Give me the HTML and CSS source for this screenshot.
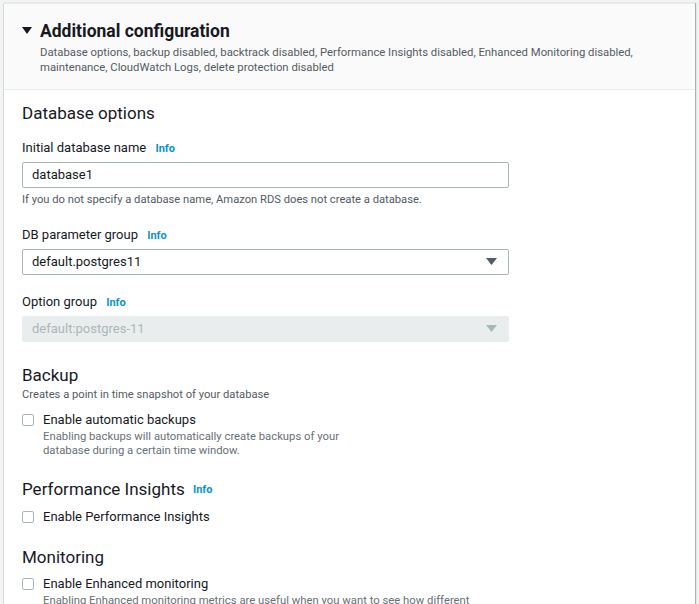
FILE: index.html
```html
<!DOCTYPE html>
<html lang="en">
<head>
<meta charset="utf-8">
<title>Additional configuration</title>
<link rel="stylesheet" href="styles.css">
</head>
<body>
<div class="page">
  <section class="card">
    <header class="card-header">
      <div class="title-row">
        <svg class="caret" width="10" height="8" viewBox="0 0 10 8"><path d="M0 0 H10 L5 7 Z" fill="#16191f"/></svg>
        <h2 class="title">Additional configuration</h2>
      </div>
      <p class="summary">Database options, backup disabled, backtrack disabled, Performance Insights disabled, Enhanced Monitoring disabled, maintenance, CloudWatch Logs, delete protection disabled</p>
    </header>
    <div class="card-body">
      <h3 class="section-title first">Database options</h3>

      <div class="field">
        <div class="label">Initial database name <span class="info">Info</span></div>
        <div class="input">database1</div>
        <div class="hint">If you do not specify a database name, Amazon RDS does not create a database.</div>
      </div>

      <div class="field">
        <div class="label">DB parameter group <span class="info">Info</span></div>
        <div class="input select"><span>default.postgres11</span>
          <svg class="arrow" width="11" height="8" viewBox="0 0 11 8"><path d="M0 0 H11 L5.5 7 Z" fill="#545b64"/></svg>
        </div>
      </div>

      <div class="field">
        <div class="label">Option group <span class="info">Info</span></div>
        <div class="input select disabled"><span>default:postgres-11</span>
          <svg class="arrow" width="11" height="8" viewBox="0 0 11 8"><path d="M0 0 H11 L5.5 7 Z" fill="#aab7b8"/></svg>
        </div>
      </div>

      <h3 class="section-title">Backup</h3>
      <p class="section-desc">Creates a point in time snapshot of your database</p>
      <div class="check">
        <span class="box"></span>
        <div class="check-text">
          <div class="check-label">Enable automatic backups</div>
          <div class="check-desc">Enabling backups will automatically create backups of your<br>database during a certain time window.</div>
        </div>
      </div>

      <h3 class="section-title">Performance Insights <span class="info">Info</span></h3>
      <div class="check">
        <span class="box"></span>
        <div class="check-text">
          <div class="check-label">Enable Performance Insights</div>
        </div>
      </div>

      <h3 class="section-title">Monitoring</h3>
      <div class="check">
        <span class="box"></span>
        <div class="check-text">
          <div class="check-label">Enable Enhanced monitoring</div>
          <div class="check-desc">Enabling Enhanced monitoring metrics are useful when you want to see how different</div>
        </div>
      </div>
    </div>
  </section>
</div>
</body>
</html>
```

FILE: styles.css
```css
* { box-sizing: border-box; }
html, body { margin: 0; padding: 0; }
body {
  background: #f2f3f3;
  font-family: Roboto, "Liberation Sans", Arial, sans-serif;
  color: #16191f;
  width: 699px;
  height: 604px;
  overflow: hidden;
}
.page { padding: 3px 4px 0 3px; }
.card {
  background: #ffffff;
  border-left: 1px solid #d5dbdb;
  border-top: 1px solid #eaeded;
  box-shadow: 1px 0 1px 0 rgba(0,28,36,0.3);
  min-height: 700px;
}
.card-header {
  background: #fafafa;
  padding: 16px 20px 14px 18px;
  border-bottom: 1px solid #eaeded;
}
.title-row { display: flex; align-items: center; gap: 8px; }
.caret { display: block; }
.title {
  margin: 0;
  font-size: 17.5px;
  font-weight: 700;
  line-height: 22px;
}
.summary {
  margin: 3px 0 0 18px;
  font-size: 11.3px;
  line-height: 15px;
  color: #545b64;
}
.card-body { padding: 10px 20px 0 18px; }
.section-title {
  margin: 21px 0 0;
  font-size: 17px;
  font-weight: 400;
  line-height: 24px;
}
.section-title.first { margin-top: 1px; }
.check + .section-title { margin-top: 19px; }
.section-title .info { font-size: 11px; margin-left: 4px; vertical-align: 2px; }
.field { margin-top: 13px; width: 487px; }
.field + .field { margin-top: 17px; }
.label { font-size: 13px; line-height: 20px; }
.info { color: #0a94cc; font-weight: 700; font-size: 11px; margin-left: 6px; }
.input {
  margin-top: 3px;
  height: 26px;
  border: 1px solid #aab7b8;
  border-radius: 2px;
  padding: 0 10px 0 9px;
  font-size: 13px;
  line-height: 24px;
  display: flex;
  align-items: center;
  justify-content: space-between;
}
.input.disabled {
  background: #eaeded;
  border-color: #eaeded;
  color: #aab7b8;
}
.arrow { display: block; margin-right: 1px; }
.hint { margin-top: 4px; font-size: 11.2px; line-height: 16px; color: #545b64; }
.section-desc { margin: 0; font-size: 11.2px; line-height: 16px; color: #545b64; }
.check { display: flex; gap: 9px; margin-top: 8px; }
.section-title + .check { margin-top: 6px; }
.box {
  flex: none;
  width: 12px;
  height: 12px;
  border: 1px solid #aab7b8;
  border-radius: 2px;
  margin-top: 3px;
  background: #fff;
}
.check-label { font-size: 13px; line-height: 18px; }
.check-desc { font-size: 11.3px; line-height: 14px; color: #687078; margin-top: 1px; }
```
